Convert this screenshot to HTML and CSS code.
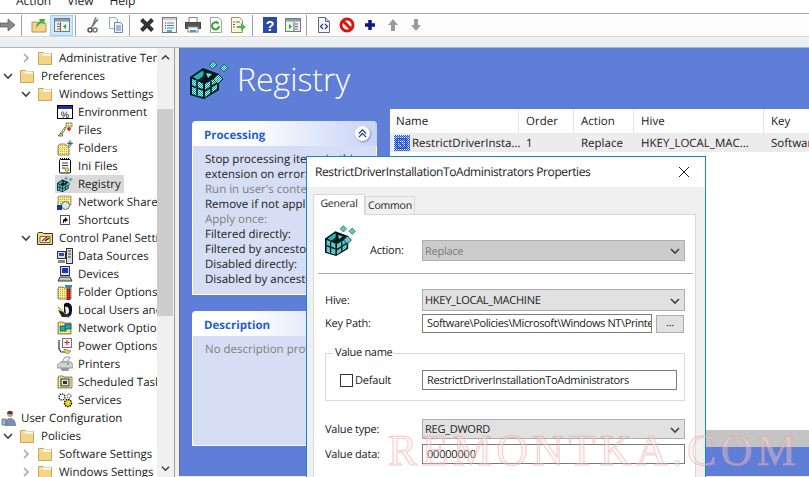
FILE: index.html
```html
<!DOCTYPE html>
<html lang="en">
<head>
<meta charset="utf-8">
<title>Registry Properties</title>
<link rel="stylesheet" href="styles.css">
</head>
<body>
<svg class="defs" aria-hidden="true">
  <defs>
    <pattern id="dith" width="2" height="2" patternUnits="userSpaceOnUse"><rect width="2" height="2" fill="#0fa3a6"/><rect width="1" height="1" fill="#a9eeea"/><rect x="1" y="1" width="1" height="1" fill="#a9eeea"/></pattern>
    <pattern id="dithb" width="2" height="2" patternUnits="userSpaceOnUse"><rect width="2" height="2" fill="#1f5fd8"/><rect width="1" height="1" fill="#e8f0ff"/><rect x="1" y="1" width="1" height="1" fill="#7fa0e8"/></pattern>
    <pattern id="dithy" width="2" height="2" patternUnits="userSpaceOnUse"><rect width="2" height="2" fill="#f2e36a"/><rect width="1" height="1" fill="#fffbd0"/><rect x="1" y="1" width="1" height="1" fill="#c9b93a"/></pattern>
  </defs>
  <symbol id="reg" viewBox="0 0 40 40">
    <polygon points="0,18 13,9 29,15 29,31 14,40 0,36" fill="#03191c"/>
    <polygon points="2,20 13,24 13,38 2,35" fill="url(#dith)"/>
    <polygon points="15,25 27,18 27,30 15,38" fill="url(#dith)"/>
    <polygon points="3,18 12,12 17,14 8,21" fill="#1fb8b6"/>
    <path d="M2 27l11 4M7 22v14M15 32l12-8M21 22v13M8 21l5 3" stroke="#03191c" stroke-width="1.600" fill="none"/>
    <polygon points="14,12 24,14 19,21 13,18" fill="#03191c"/>
    <polygon points="16,14 22,15 18,19" fill="#6fdcd4"/>
    <polygon points="28,15 33,20 28,25 23,20" fill="url(#dith)" stroke="#03191c"/>
    <polygon points="23,2 27,6 23,10 19,6" fill="url(#dith)" stroke="#0b5a60" stroke-width=".8"/>
    <polygon points="34,5 38,9 34,13 30,9" fill="url(#dith)" stroke="#0b5a60" stroke-width=".8"/>
  </symbol>
  <symbol id="folder" viewBox="0 0 16 16">
    <path d="M1.500 14.500V2.500h5l1 1h7v11z" fill="#f6dc9a" stroke="#c9a75b"/>
    <path d="M6 3.500h8v2H6z" fill="#fff"/>
    <path d="M2 6h12v8H2z" fill="#f5d488"/>
  </symbol>
  <symbol id="down" viewBox="0 0 10 10"><path d="M1 3l4 4 4-4" fill="none" stroke="#404040" stroke-width="1.600"/></symbol>
  <symbol id="right" viewBox="0 0 10 10"><path d="M3 1l4 4-4 4" fill="none" stroke="#a6a6a6" stroke-width="1.600"/></symbol>
  <symbol id="env" viewBox="0 0 16 16"><rect x=".5" y="1.500" width="15" height="13" fill="#fff" stroke="#000"/><rect x="1" y="2" width="14" height="3" fill="#1c2f9c"/><text x="8" y="13.500" font-size="9.500" text-anchor="middle" font-family="Liberation Sans" fill="#000">%</text></symbol>
  <symbol id="files" viewBox="0 0 16 16"><path d="M2 13l6-8 1 1-5 8z" fill="url(#dithy)" stroke="#333" stroke-width=".6"/><path d="M9 1h6v4H9z" fill="url(#dithy)" stroke="#555" stroke-width=".6"/><path d="M1 14l3-3 2 3z" fill="url(#dithy)" stroke="#333" stroke-width=".6"/><path d="M10 7h4M12 5v4" stroke="#e01010" stroke-width="1.300"/></symbol>
  <symbol id="foldn" viewBox="0 0 16 16"><path d="M1 15V6l2-2h5l2 2h2v9z" fill="url(#dithy)" stroke="#555" stroke-width=".7"/><path d="M13 0v7M10 3.500h6M11 1.500l4 4M15 1.500l-4 4" stroke="#444" stroke-width=".8"/></symbol>
  <symbol id="ini" viewBox="0 0 16 16"><rect x="2.500" y="1.500" width="11" height="13.500" rx="1" fill="#fff" stroke="#000"/><path d="M3 .5h10" stroke="#000" stroke-dasharray="1 1"/><path d="M5 5h6M5 7.500h6M5 10h3" stroke="#333"/><circle cx="10" cy="11.500" r="2" fill="#e8d03a" stroke="#555" stroke-width=".5"/></symbol>
  <symbol id="net" viewBox="0 0 16 16"><path d="M1 13V3l1-1h12v9z" fill="url(#dithy)" stroke="#777" stroke-width=".7"/><circle cx="8.500" cy="11.500" r="4" fill="#dfe6e6" stroke="#666"/><rect y="11" width="5" height="5" fill="#1232b8"/></symbol>
  <symbol id="short" viewBox="0 0 16 16"><rect x="3.500" y="3.500" width="9" height="9" fill="#fff" stroke="#555"/><path d="M6 11V8l1-1h1V5l3 3-3 2V8.500L7.500 9 7 11z" fill="#000"/></symbol>
  <symbol id="cp" viewBox="0 0 16 16"><path d="M.5 14.500V3.500l1-1h4l1 1h9v11z" fill="#f2e36a" stroke="#333"/><path d="M3 6.500h10v6H3z" fill="#f4f0d8" stroke="#333" stroke-width=".7"/><path d="M5 11l5-4" stroke="#d02020" stroke-width="1.500"/><path d="M8 11l4-3" stroke="#222" stroke-width="1.500"/></symbol>
  <symbol id="data" viewBox="0 0 16 16"><rect x=".5" y="3.500" width="8" height="7" fill="#d8dede" stroke="#333"/><rect x="2" y="5" width="5" height="3" fill="#2f4fa8"/><rect x="9.500" y=".5" width="6" height="15" fill="#d8dede" stroke="#333"/><path d="M11 3h3M11 6h3M11 9h3" stroke="#333"/><path d="M1 12h7v3H1z" fill="#888"/></symbol>
  <symbol id="dev" viewBox="0 0 16 16"><rect x="3.500" y=".5" width="9" height="9" fill="#d8dede" stroke="#333"/><rect x="5" y="2" width="6" height="5" fill="#1638c8"/><path d="M1 15l2-4h10l2 4z" fill="#bfc6c6" stroke="#333"/></symbol>
  <symbol id="fopt" viewBox="0 0 16 16"><path d="M1 15V4l1-1h4l1 1h7v11z" fill="url(#dithy)" stroke="#555" stroke-width=".7"/><rect x="10" y="5" width="3" height="11" fill="#d8201c" stroke="#600" stroke-width=".5"/><path d="M8 1h7v2l-2 2h-3L8 3z" fill="#3a8a9c"/></symbol>
  <symbol id="users" viewBox="0 0 16 16"><path d="M7 2c4-3 8 0 8 4 0 3 0 7-2 8-3 1-5 0-6-2z" fill="#111"/><path d="M8 5c3-1 4 1 4 4s-2 3-3 3z" fill="#f0f0f0"/><path d="M1 5l8 8" stroke="#d0b020" stroke-width="1.600"/><path d="M1 8l4 7h6l-5-5z" fill="#222"/><circle cx="11" cy="14" r="1.500" fill="#1c38b8"/></symbol>
  <symbol id="nopt" viewBox="0 0 16 16"><path d="M1 14V3l1-1h4l1 1h7v11z" fill="url(#dithy)" stroke="#555" stroke-width=".7"/><rect x="3" y="6" width="6" height="5" fill="#18a8b8" stroke="#222" stroke-width=".5"/><rect x="8" y="4" width="6" height="5" fill="#18a8b8" stroke="#222" stroke-width=".5"/></symbol>
  <symbol id="pow" viewBox="0 0 16 16"><rect x="5.500" y=".5" width="9" height="9" fill="#f0f0f0" stroke="#777"/><path d="M10 2v5M7.500 4.500h5" stroke="#d01818"/><path d="M2 2v9l2 3h4" fill="none" stroke="#333" stroke-width="1.200"/><path d="M7 11l4 1 3 1-3 3-4-2z" fill="#e6d23c" stroke="#555" stroke-width=".5"/></symbol>
  <symbol id="prn" viewBox="0 0 16 16"><path d="M5 6l3-5h5l-2 5z" fill="#eee" stroke="#666" stroke-width=".6"/><path d="M0 9l4-3h10l2 3v3H0z" fill="#cfd4d4" stroke="#666" stroke-width=".6"/><path d="M3 12h10l-2 3H5z" fill="#999"/><path d="M10 8h2" stroke="#18a018"/></symbol>
  <symbol id="task" viewBox="0 0 16 16"><path d="M1 14V3l1-1h4l1 1h8v11z" fill="url(#dithy)" stroke="#555" stroke-width=".7"/><rect x="4" y="5" width="8" height="7" fill="#d8dede" stroke="#333"/><rect x="6" y="7" width="4" height="3" fill="#333"/></symbol>
  <symbol id="svc" viewBox="0 0 16 16"><circle cx="5" cy="5" r="3" fill="#fff" stroke="#111" stroke-width="1.200" stroke-dasharray="1.500 .8"/><circle cx="11" cy="11" r="3.500" fill="#f0d820" stroke="#111" stroke-width="1.500" stroke-dasharray="1.500 .8"/><circle cx="12" cy="4" r="2" fill="#fff" stroke="#111" stroke-dasharray="1 .8"/></symbol>
  <symbol id="user" viewBox="0 0 16 16"><circle cx="9" cy="4" r="3" fill="#c49a7a"/><path d="M6 3c1-3 5-3 6 0l-1 1H7z" fill="#444"/><path d="M4 16c0-6 2-8 5-8s6 2 6 8z" fill="#7d8fb0"/><path d="M1 9h4v6H1z" fill="#9ab8d8" stroke="#355" stroke-width=".6"/></symbol>
  <symbol id="t-back" viewBox="0 0 16 16"><path d="M0 6h8V2l7 6-7 6v-4H0z" fill="#8a8a8a" stroke="#555" stroke-width=".7"/></symbol>
  <symbol id="t-up" viewBox="0 0 16 16"><path d="M1 15V5h5l1 1h8v9z" fill="#f3d48a" stroke="#b8964a"/><path d="M5 11c0-4 2-6 4-7L8 2l6 0-1 5-2-1.500C9 6.500 7 8 5 11z" fill="#3fae3a"/></symbol>
  <symbol id="t-tree" viewBox="0 0 16 16"><rect x=".5" y="1.500" width="15" height="13" fill="#eef0f0" stroke="#7a7a7a"/><rect x="1" y="2" width="14" height="2.500" fill="#8c9aa8"/><path d="M3 7h3M3 9.500h3M3 12h3M6.500 5v9" stroke="#667"/><path d="M12 7v5L9 9.500z" fill="#2fa82f"/></symbol>
  <symbol id="t-cut" viewBox="0 0 16 16"><path d="M11 0L7 10M13 2L6 11" stroke="#7a7a7a" stroke-width="1.500" fill="none"/><circle cx="5" cy="13" r="2" fill="none" stroke="#555" stroke-width="1.500"/><circle cx="10" cy="13" r="2" fill="none" stroke="#777" stroke-width="1.500"/></symbol>
  <symbol id="t-copy" viewBox="0 0 16 16"><path d="M1.500 .5h6l2 2v9h-8z" fill="#fff" stroke="#9aa"/><path d="M6.500 5.500h6l2 2v8h-8z" fill="#eef4fa" stroke="#7088a8"/><path d="M8 9h5M8 11h5M8 13h5" stroke="#5f7fa8"/></symbol>
  <symbol id="t-del" viewBox="0 0 16 16"><path d="M2.500 2.500l11 11M13.500 2.500l-11 11" stroke="#333" stroke-width="4"/></symbol>
  <symbol id="t-prop" viewBox="0 0 16 16"><rect x=".5" y=".5" width="14" height="15" fill="#f4f6f6" stroke="#777"/><rect x="1" y="1" width="13" height="2" fill="#ccd"/><path d="M5 6h7M5 8.500h7M5 11h7" stroke="#5f7fa8"/><path d="M3 6h1M3 8.500h1M3 11h1" stroke="#333"/><rect x="5" y="13" width="5" height="2" fill="#2fb8d8"/></symbol>
  <symbol id="t-print" viewBox="0 0 16 16"><rect x="4" y=".5" width="8" height="5" fill="#fff" stroke="#888"/><rect x=".5" y="5.500" width="15" height="6" fill="#555" stroke="#444"/><rect x="3" y="10" width="10" height="5" fill="#fff" stroke="#888"/><rect x="5" y="13" width="6" height="2" fill="#3a9fd8"/></symbol>
  <symbol id="t-ref" viewBox="0 0 16 16"><path d="M2.500 .5h8l3 3v12h-11z" fill="#fff" stroke="#9aa"/><path d="M11 9a3.500 3.500 0 1 1-1.500-3" fill="none" stroke="#2fa82f" stroke-width="2"/><path d="M8 4l3 1-1 3z" fill="#2fa82f"/></symbol>
  <symbol id="t-exp" viewBox="0 0 16 16"><path d="M.5 .5h8l3 3v12H.5z" fill="#fdf8e0" stroke="#a09060"/><path d="M2 5h2M2 7.500h2M2 10h2M5 5h4" stroke="#665"/><path d="M6 9h4V6l5 4-5 4v-3H6z" fill="#4fb84a"/></symbol>
  <symbol id="t-help" viewBox="0 0 14 16"><rect width="14" height="16" fill="#2a4aa8"/><text x="7" y="13.500" font-size="14" font-weight="700" text-anchor="middle" font-family="Liberation Sans" fill="#fff">?</text></symbol>
  <symbol id="t-show" viewBox="0 0 16 16"><rect x=".5" y="1.500" width="15" height="13" fill="#eef0f0" stroke="#7a7a7a"/><rect x="1" y="2" width="14" height="2.500" fill="#8c9aa8"/><path d="M10 7h3M10 9.500h3M10 12h3M9 5v9" stroke="#667"/><path d="M4 7v5l3-2.500z" fill="#2fa82f"/></symbol>
  <symbol id="t-script" viewBox="0 0 16 16"><path d="M2.500 .5h7l4 4v11h-11z" fill="#f4f6fa" stroke="#667"/><path d="M9.500 .5v4h4" fill="#b8c8e8" stroke="#667"/><path d="M7 7L4.500 9.500 7 12M9 7l2.500 2.500L9 12" fill="none" stroke="#2a3fa8" stroke-width="1.300"/></symbol>
  <symbol id="t-stop" viewBox="0 0 16 16"><circle cx="8" cy="8" r="6" fill="#fff" stroke="#d8140c" stroke-width="3"/><path d="M3.500 3.500l9 9" stroke="#d8140c" stroke-width="3"/></symbol>
  <symbol id="t-plus" viewBox="0 0 16 16"><path d="M8 3v10M3 8h10" stroke="#101a78" stroke-width="3.500"/></symbol>
  <symbol id="t-arrup" viewBox="0 0 16 16"><path d="M8 2l5 6h-3v6H6V8H3z" fill="#9a9a9a"/></symbol>
  <symbol id="t-arrdn" viewBox="0 0 16 16"><path d="M8 14l5-6h-3V2H6v6H3z" fill="#9a9a9a"/></symbol>
  <symbol id="collapse" viewBox="0 0 10 10"><path d="M1 5l4-4 4 4M1 9l4-4 4 4" fill="none" stroke="#1f3f9c" stroke-width="1.400"/></symbol>
  <symbol id="close" viewBox="0 0 10 10"><path d="M0 0l10 10M10 0L0 10" stroke="#222" stroke-width="1"/></symbol>
  <symbol id="listicon" viewBox="0 0 16 16"><rect width="16" height="16" fill="url(#dithb)"/><rect x="3" y="4" width="9" height="9" fill="url(#dithb)" stroke="#16309c"/><path d="M5 7l4 4" stroke="#b03060"/></symbol>
</svg>

<div class="app">
  <nav class="menu"><span>Action</span><span>View</span><span>Help</span></nav>
  <div class="toolbar">
    <button class="tb"><svg class="ti"><use href="#t-back"/></svg></button>
    <i class="sep"></i>
    <button class="tb"><svg class="ti"><use href="#t-up"/></svg></button>
    <button class="tb on"><svg class="ti"><use href="#t-tree"/></svg></button>
    <i class="sep"></i>
    <button class="tb"><svg class="ti"><use href="#t-cut"/></svg></button>
    <button class="tb"><svg class="ti"><use href="#t-copy"/></svg></button>
    <i class="sep"></i>
    <button class="tb"><svg class="ti"><use href="#t-del"/></svg></button>
    <button class="tb"><svg class="ti"><use href="#t-prop"/></svg></button>
    <button class="tb"><svg class="ti"><use href="#t-print"/></svg></button>
    <button class="tb"><svg class="ti"><use href="#t-ref"/></svg></button>
    <button class="tb"><svg class="ti"><use href="#t-exp"/></svg></button>
    <i class="sep"></i>
    <button class="tb"><svg class="ti"><use href="#t-help"/></svg></button>
    <button class="tb"><svg class="ti"><use href="#t-show"/></svg></button>
    <i class="sep"></i>
    <button class="tb"><svg class="ti"><use href="#t-script"/></svg></button>
    <button class="tb"><svg class="ti"><use href="#t-stop"/></svg></button>
    <button class="tb"><svg class="ti"><use href="#t-plus"/></svg></button>
    <button class="tb"><svg class="ti"><use href="#t-arrup"/></svg></button>
    <button class="tb"><svg class="ti"><use href="#t-arrdn"/></svg></button>
  </div>
  <div class="strip"></div>

  <main class="main">
    <aside class="treepane">
      <div class="tree">
        <div class="row lv1"><svg class="chev"><use href="#right"/></svg><svg class="fld"><use href="#folder"/></svg><span>Administrative Templates</span></div>
        <div class="row lv0"><svg class="chev"><use href="#down"/></svg><svg class="fld"><use href="#folder"/></svg><span>Preferences</span></div>
        <div class="row lv1"><svg class="chev"><use href="#down"/></svg><svg class="fld"><use href="#folder"/></svg><span>Windows Settings</span></div>
        <div class="row lv2"><svg class="ico"><use href="#env"/></svg><span>Environment</span></div>
        <div class="row lv2"><svg class="ico"><use href="#files"/></svg><span>Files</span></div>
        <div class="row lv2"><svg class="ico"><use href="#foldn"/></svg><span>Folders</span></div>
        <div class="row lv2"><svg class="ico"><use href="#ini"/></svg><span>Ini Files</span></div>
        <div class="row lv2 sel"><svg class="ico"><use href="#reg"/></svg><span>Registry</span></div>
        <div class="row lv2"><svg class="ico"><use href="#net"/></svg><span>Network Shares</span></div>
        <div class="row lv2"><svg class="ico"><use href="#short"/></svg><span>Shortcuts</span></div>
        <div class="row lv1"><svg class="chev"><use href="#down"/></svg><svg class="fld"><use href="#cp"/></svg><span>Control Panel Settings</span></div>
        <div class="row lv2"><svg class="ico"><use href="#data"/></svg><span>Data Sources</span></div>
        <div class="row lv2"><svg class="ico"><use href="#dev"/></svg><span>Devices</span></div>
        <div class="row lv2"><svg class="ico"><use href="#fopt"/></svg><span>Folder Options</span></div>
        <div class="row lv2"><svg class="ico"><use href="#users"/></svg><span>Local Users and Groups</span></div>
        <div class="row lv2"><svg class="ico"><use href="#nopt"/></svg><span>Network Options</span></div>
        <div class="row lv2"><svg class="ico"><use href="#pow"/></svg><span>Power Options</span></div>
        <div class="row lv2"><svg class="ico"><use href="#prn"/></svg><span>Printers</span></div>
        <div class="row lv2"><svg class="ico"><use href="#task"/></svg><span>Scheduled Tasks</span></div>
        <div class="row lv2"><svg class="ico"><use href="#svc"/></svg><span>Services</span></div>
        <div class="row lvu"><svg class="usr"><use href="#user"/></svg><span>User Configuration</span></div>
        <div class="row lv0"><svg class="chev"><use href="#down"/></svg><svg class="fld"><use href="#folder"/></svg><span>Policies</span></div>
        <div class="row lv1"><svg class="chev"><use href="#right"/></svg><svg class="fld"><use href="#folder"/></svg><span>Software Settings</span></div>
        <div class="row lv1"><svg class="chev"><use href="#right"/></svg><svg class="fld"><use href="#folder"/></svg><span>Windows Settings</span></div>
      </div>
      <div class="vscroll">
        <svg class="sa"><use href="#down"/></svg>
        <div class="thumb"></div>
        <svg class="sb"><use href="#down"/></svg>
      </div>
    </aside>

    <section class="pane">
      <header class="phead"><svg class="pico"><use href="#reg"/></svg><h1>Registry</h1></header>
      <div class="pcols">
        <div class="cards">
          <div class="card proc">
            <div class="chead"><b>Processing</b><span class="cbtn"><svg class="cbi"><use href="#collapse"/></svg></span></div>
            <div class="cbody">
              <p>Stop processing items in this</p>
              <p>extension on error:</p>
              <p class="dim">Run in user's context:</p>
              <p>Remove if not applicable:</p>
              <p class="dim">Apply once:</p>
              <p>Filtered directly:</p>
              <p>Filtered by ancestor:</p>
              <p>Disabled directly:</p>
              <p>Disabled by ancestor:</p>
            </div>
          </div>
          <div class="card desc">
            <div class="chead"><b>Description</b></div>
            <div class="cbody"><p class="dim">No description provided.</p></div>
          </div>
        </div>
        <div class="listwrap">
          <div class="list">
            <div class="lrow lh"><span class="c1">Name</span><span class="c2">Order</span><span class="c3">Action</span><span class="c4">Hive</span><span class="c5">Key</span></div>
            <div class="lrow li"><span class="c1"><svg class="lico"><use href="#listicon"/></svg>RestrictDriverInsta...</span><span class="c2">1</span><span class="c3">Replace</span><span class="c4">HKEY_LOCAL_MAC...</span><span class="c5">Software\Policies</span></div>
          </div>
          <div class="lscroll"></div>
        </div>
      </div>
    </section>
  </main>

  <div class="dialog">
    <div class="dtitle"><span>RestrictDriverInstallationToAdministrators Properties</span><svg class="dx"><use href="#close"/></svg></div>
    <div class="dbody">
      <div class="tabs"><span class="tab act">General</span><span class="tab">Common</span></div>
      <div class="panel">
        <div class="frow first"><svg class="dico"><use href="#reg"/></svg><label class="alabel">Action:</label><div class="sel-box off">Replace<svg class="sv"><use href="#down"/></svg></div></div>
        <hr class="rule">
        <div class="frow hive"><label>Hive:</label><div class="sel-box">HKEY_LOCAL_MACHINE<svg class="sv"><use href="#down"/></svg></div></div>
        <div class="frow key"><label>Key Path:</label><div class="inp keyp">Software\Policies\Microsoft\Windows NT\Printers</div><span class="dots">...</span></div>
        <fieldset class="group">
          <legend>Value name</legend>
          <div class="grow"><span class="cb"></span><span class="cbl">Default</span><div class="inp name">RestrictDriverInstallationToAdministrators</div></div>
        </fieldset>
        <div class="frow vtype"><label>Value type:</label><div class="sel-box">REG_DWORD<svg class="sv"><use href="#down"/></svg></div></div>
        <div class="frow vdata"><label>Value data:</label><div class="inp vd">00000000</div></div>
      </div>
    </div>
  </div>

  <div class="mark">REMONTKA.COM</div>
</div>
</body>
</html>
```
FILE: styles.css
```css
* { box-sizing: border-box; }
html, body { margin: 0; padding: 0; }
body { width: 809px; height: 477px; overflow: hidden; background: #f0f0f0; font-family: "Open Sans", "Liberation Sans", sans-serif; font-size: 11.5px; color: #1a1a1a; text-rendering: geometricPrecision; }
.defs { position: absolute; width: 0; height: 0; }
.app { position: relative; width: 809px; height: 477px; overflow: hidden; display: flex; flex-direction: column; }

.menu { height: 14px; background: #fff; border-bottom: 1px solid #a8a8a8; display: flex; align-items: flex-end; padding-left: 16px; gap: 16px; overflow: hidden; font-size: 12px; color: #222; }
.menu span { line-height: 16px; margin-bottom: 4px; flex: none; }
.toolbar { height: 23px; background: #fdfdfd; border-bottom: 1px solid #d6d6d6; display: flex; align-items: center; }
.tb { width: 23px; height: 21px; padding: 0; border: 1px solid transparent; background: none; display: flex; align-items: center; justify-content: center; flex: none; }
.tb:first-child { margin-left: -4px; }
.tb.on { background: #cce8ff; border-color: #99d1ff; }
.ti { width: 16px; height: 16px; display: block; }
.sep { width: 8px; height: 21px; flex: none; padding-left: 2px; display: block; }
.sep::before { content: ""; display: block; width: 1px; height: 100%; background: #a0a0a0; }
.strip { height: 10px; background: linear-gradient(#f2f2f2, #e6eef6); }

.main { flex: 1; display: flex; min-height: 0; background: #f0f0f0; border-top: 1px solid #b4b4b4; }
.treepane { width: 175px; background: #fff; border-right: 1px solid #a0a0a0; display: flex; flex: none; }
.tree { width: 157px; overflow: hidden; padding-top: 1px; flex: none; }
.row { height: 18px; display: flex; align-items: center; white-space: nowrap; line-height: 18px; }
.row span { flex: none; padding-top: 1px; }
.lv0 { padding-left: 3px; }
.lv1 { padding-left: 21px; }
.lv2 { padding-left: 57px; }
.lvu { padding-left: 1px; }
.chev { width: 10px; height: 10px; margin-right: 6px; flex: none; }
.fld { width: 16px; height: 16px; margin-right: 6px; flex: none; }
.ico { width: 16px; height: 16px; margin-right: 5px; flex: none; }
.usr { width: 16px; height: 16px; margin-right: 4px; flex: none; }
.sel { background: linear-gradient(#d9d9d9, #d9d9d9) 55px 0 / 69px 18px no-repeat; }
.vscroll { width: 17px; background: #f0f0f0; padding: 3px 1px 0 0; display: flex; flex-direction: column; align-items: center; }
.sa { width: 9px; height: 9px; transform: rotate(180deg); margin-top: 2px; flex: none; }
.thumb { width: 16px; height: 207px; background: #cdcdcd; margin-top: 47px; flex: none; }
.sb { width: 9px; height: 9px; margin-top: 148px; flex: none; }

.pane { flex: 1; margin-left: 4px; margin-bottom: 1px; background: #5f7ed8; border-left: 1px solid #6e6e6e; padding-left: 12px; display: flex; flex-direction: column; min-width: 0; }
.phead { height: 61px; display: flex; align-items: center; flex: none; margin-left: -2px; }
.pico { width: 40px; height: 40px; margin-right: 7px; flex: none; }
h1 { margin: 2px 0 0; font-size: 32px; font-weight: 300; color: #fff; line-height: 40px; }
.pcols { flex: 1; display: flex; gap: 13px; min-height: 0; }
.cards { width: 185px; padding-top: 12px; display: flex; flex-direction: column; gap: 16px; flex: none; }
.card { display: flex; flex-direction: column; }
.proc { height: 174px; }
.desc { height: 135px; }
.chead { height: 25px; border-radius: 4px 4px 0 0; background: linear-gradient(90deg, #fff 30%, #c6d3f7); display: flex; align-items: center; justify-content: space-between; padding: 0 7px 0 12px; flex: none; }
.chead b { font-size: 11.5px; color: #2260d0; font-weight: 700; padding-top: 3px; }
.cbtn { width: 15px; height: 15px; border-radius: 50%; background: #fff; box-shadow: 1px 1px 2px #8090b8; display: flex; align-items: center; justify-content: center; }
.cbi { width: 9px; height: 9px; }
.cbody { flex: 1; background: #d5def5; border: 1px solid #fff; border-top: 0; padding: 6px 0 0 12px; overflow: hidden; }
.cbody p { margin: 0; line-height: 15px; white-space: nowrap; color: #222; }
.cbody p.dim { color: #7f7f7f; }
.listwrap { flex: 1; display: flex; flex-direction: column; min-width: 0; }
.list { height: 321px; background: #fff; flex: none; overflow: hidden; }
.lscroll { height: 17px; background: #c4c4c4; flex: none; }
.lrow { display: flex; white-space: nowrap; }
.lh { height: 24px; align-items: center; }
.li { height: 19px; align-items: center; background: #ececec; }
.lrow span { padding-left: 7px; flex: none; display: flex; align-items: center; height: 100%; }
.lh span { border-right: 1px solid #e5e5e5; }
.li span { padding-top: 2px; }
.c1 { width: 129px; }
.lrow .c1 { padding-left: 6px; }
.li .c1 { padding-left: 4px; }
.c2 { width: 55px; }
.c3 { width: 60px; }
.c4 { width: 130px; }
.c5 { width: 90px; }
.lico { width: 16px; height: 16px; margin: -2px 2px 0 0; flex: none; }

.dialog { position: absolute; left: 306px; top: 156px; width: 400px; height: 330px; border: 1px solid #1883d7; background: #f0f0f0; display: flex; flex-direction: column; }
.dtitle { height: 30px; background: #fff; display: flex; align-items: center; justify-content: space-between; padding: 0 16px 1px 8px; flex: none; font-size: 12px; letter-spacing: -.4px; }
.dx { width: 10px; height: 10px; margin-top: 1px; }
.dbody { flex: 1; padding: 7px 9px 0 6px; display: flex; flex-direction: column; font-size: 11px; letter-spacing: -.2px; }
.tabs { display: flex; align-items: flex-end; height: 20px; flex: none; }
.tab { height: 18px; width: 50px; background: #f0f0f0; border: 1px solid #d9d9d9; border-bottom: 0; line-height: 18px; text-align: center; font-size: 10.5px; }
.tab.act { height: 21px; width: 52px; background: #fff; margin-bottom: -1px; position: relative; z-index: 1; line-height: 19px; }
.panel { flex: 1; background: #fff; border: 1px solid #d9d9d9; padding: 0 11px; display: flex; flex-direction: column; }
.frow { display: flex; align-items: center; flex: none; }
.frow label { width: 97px; flex: none; }
.first { height: 58px; padding-top: 13px; }
.dico { width: 32px; height: 34px; margin-right: 13px; flex: none; margin-top: -21px; }
.frow .alabel { width: 52px; }
.rule { margin: 0 0 0 -7px; width: 375px; height: 1px; border: 0; background: #a8a8a8; flex: none; }
.sel-box { width: 263px; height: 22px; background: #e1e1e1; border: 1px solid #adadad; display: flex; align-items: center; justify-content: space-between; padding: 1px 4px 0 2px; flex: none; letter-spacing: -.25px; }
.sel-box.off { background: #cccccc; color: #7a7a7a; height: 21px; }
.sv { width: 10px; height: 10px; }
.hive { margin-top: 15px; }
.key { margin-top: 3px; }
.inp { height: 20px; background: #fff; border: 1px solid #7a7a7a; line-height: 19px; padding-left: 4px; white-space: nowrap; overflow: hidden; flex: none; }
.keyp { width: 230px; height: 19px; line-height: 17px; letter-spacing: -.38px; }
.dots { width: 28px; height: 18px; margin-left: 4px; background: #e1e1e1; border: 1px solid #adadad; text-align: center; line-height: 14px; flex: none; }
.group { margin: 13px 0 0; padding: 0; width: 360px; height: 55px; border: 1px solid #d9d9d9; flex: none; }
.group legend { margin-left: 7px; padding: 0 2px; line-height: 14px; letter-spacing: -.3px; }
.grow { display: flex; align-items: center; padding-left: 14px; height: 20px; margin-top: 10px; }
.cb { width: 13px; height: 13px; border: 1px solid #333; background: #fff; margin-right: 2px; flex: none; }
.cbl { width: 67px; flex: none; }
.inp.name { width: 255px; letter-spacing: -.33px; }
.vtype { margin-top: 18px; }
.vtype .sel-box { height: 20px; }
.vtype label, .vdata label { padding-top: 1px; }
.vdata { margin-top: 5px; }
.inp.vd { width: 263px; background: transparent; }

.mark { position: absolute; left: 388px; top: 429px; font-family: "Liberation Serif", serif; font-size: 44px; line-height: 44px; letter-spacing: 4.3px; white-space: nowrap; color: rgba(255, 225, 225, .35); -webkit-text-stroke: 1px rgba(225, 150, 150, .45); pointer-events: none; }
```
